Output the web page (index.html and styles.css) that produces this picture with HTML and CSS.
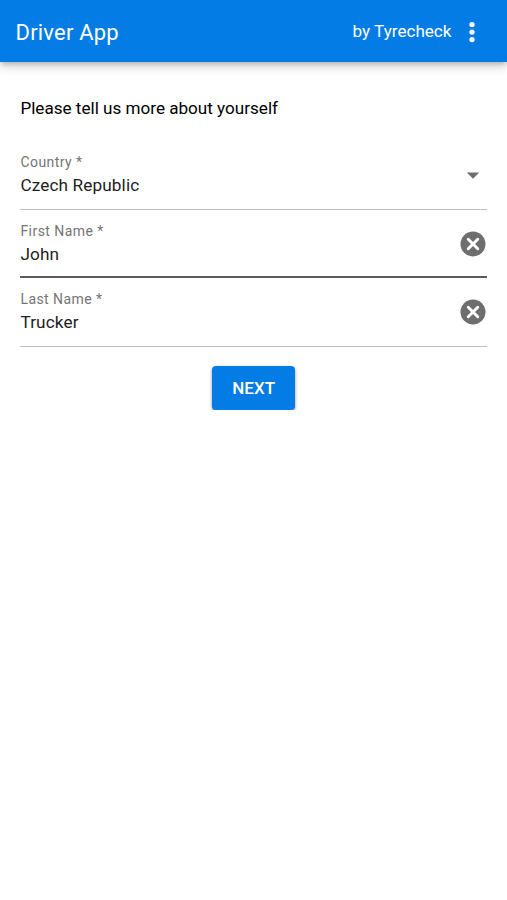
FILE: index.html
```html
<!DOCTYPE html>
<html lang="en">
<head>
<meta charset="utf-8">
<title>Driver App</title>
<link rel="stylesheet" href="styles.css">
</head>
<body>
<header class="bar">
  <h1 class="title">Driver App</h1>
  <span class="by">by Tyrecheck</span>
  <svg class="more" viewBox="0 0 24 24"><circle cx="12" cy="6" r="2.1"/><circle cx="12" cy="12" r="2.1"/><circle cx="12" cy="18" r="2.1"/></svg>
</header>
<main class="content">
  <p class="intro">Please tell us more about yourself</p>
  <div class="field">
    <div class="text"><div class="label">Country *</div><div class="value">Czech Republic</div></div>
    <svg class="icon" viewBox="0 0 24 24"><path d="M7 10l5 5 5-5z"/></svg>
  </div>
  <div class="field focused">
    <div class="text"><div class="label">First Name *</div><div class="value">John</div></div>
    <svg class="icon" viewBox="0 0 24 24"><circle cx="12" cy="12" r="10"/><path class="cross" d="M8.2 8.2l7.6 7.6M15.8 8.2l-7.6 7.6"/></svg>
  </div>
  <div class="field">
    <div class="text"><div class="label">Last Name *</div><div class="value">Trucker</div></div>
    <svg class="icon" viewBox="0 0 24 24"><circle cx="12" cy="12" r="10"/><path class="cross" d="M8.2 8.2l7.6 7.6M15.8 8.2l-7.6 7.6"/></svg>
  </div>
  <button class="next">NEXT</button>
</main>
</body>
</html>
```
FILE: styles.css
```css
* { box-sizing: border-box; }
body { margin: 0; background: #fff; font-family: Roboto, "Liberation Sans", sans-serif; color: #1d1d1d; }
.bar { display: flex; align-items: center; height: 62px; padding: 1px 20px 0 15.5px; background: #037ce6; color: #fff; box-shadow: 0 3px 5px -1px rgba(0,0,0,.2), 0 5px 10px rgba(0,0,0,.15); }
.title { margin: 0; flex: 1; padding-top: 1px; font-size: 22px; font-weight: 400; letter-spacing: .2px; }
.by { font-size: 17.1px; margin-right: 5.5px; padding-bottom: 1px; }
.more { width: 30px; height: 30px; fill: #fff; }
.content { display: flex; flex-direction: column; padding: 35px 20px 0 20.4px; }
.intro { margin: 0 0 22px; padding-top: 1px; font-size: 17.1px; line-height: 21px; color: #000; }
.field { display: flex; height: 68.5px; border-bottom: 1px solid #c0c0c0; justify-content: space-between; }
.focused { border-bottom: 2px solid #5c5c5c; }
.label { font-size: 14px; line-height: 20px; padding-top: 11.4px; color: #757575; letter-spacing: .45px; }
.value { font-size: 17.2px; line-height: 24px; padding-top: 1px; letter-spacing: .12px; }
.icon { width: 30px; height: 30px; margin: 19px -.7px 0 0; fill: #6e6e6e; }
.cross { fill: none; stroke: #fff; stroke-width: 2.3; stroke-linecap: round; }
.next { align-self: center; width: 83px; height: 44px; margin-top: 19px; padding: 0; border: 0; border-radius: 4px; background: #037ce6; color: #fff; font: 500 17px Roboto, sans-serif; box-shadow: 0 2px 3px rgba(0,0,0,.3), 0 1px 4px rgba(0,0,0,.15); }
```
